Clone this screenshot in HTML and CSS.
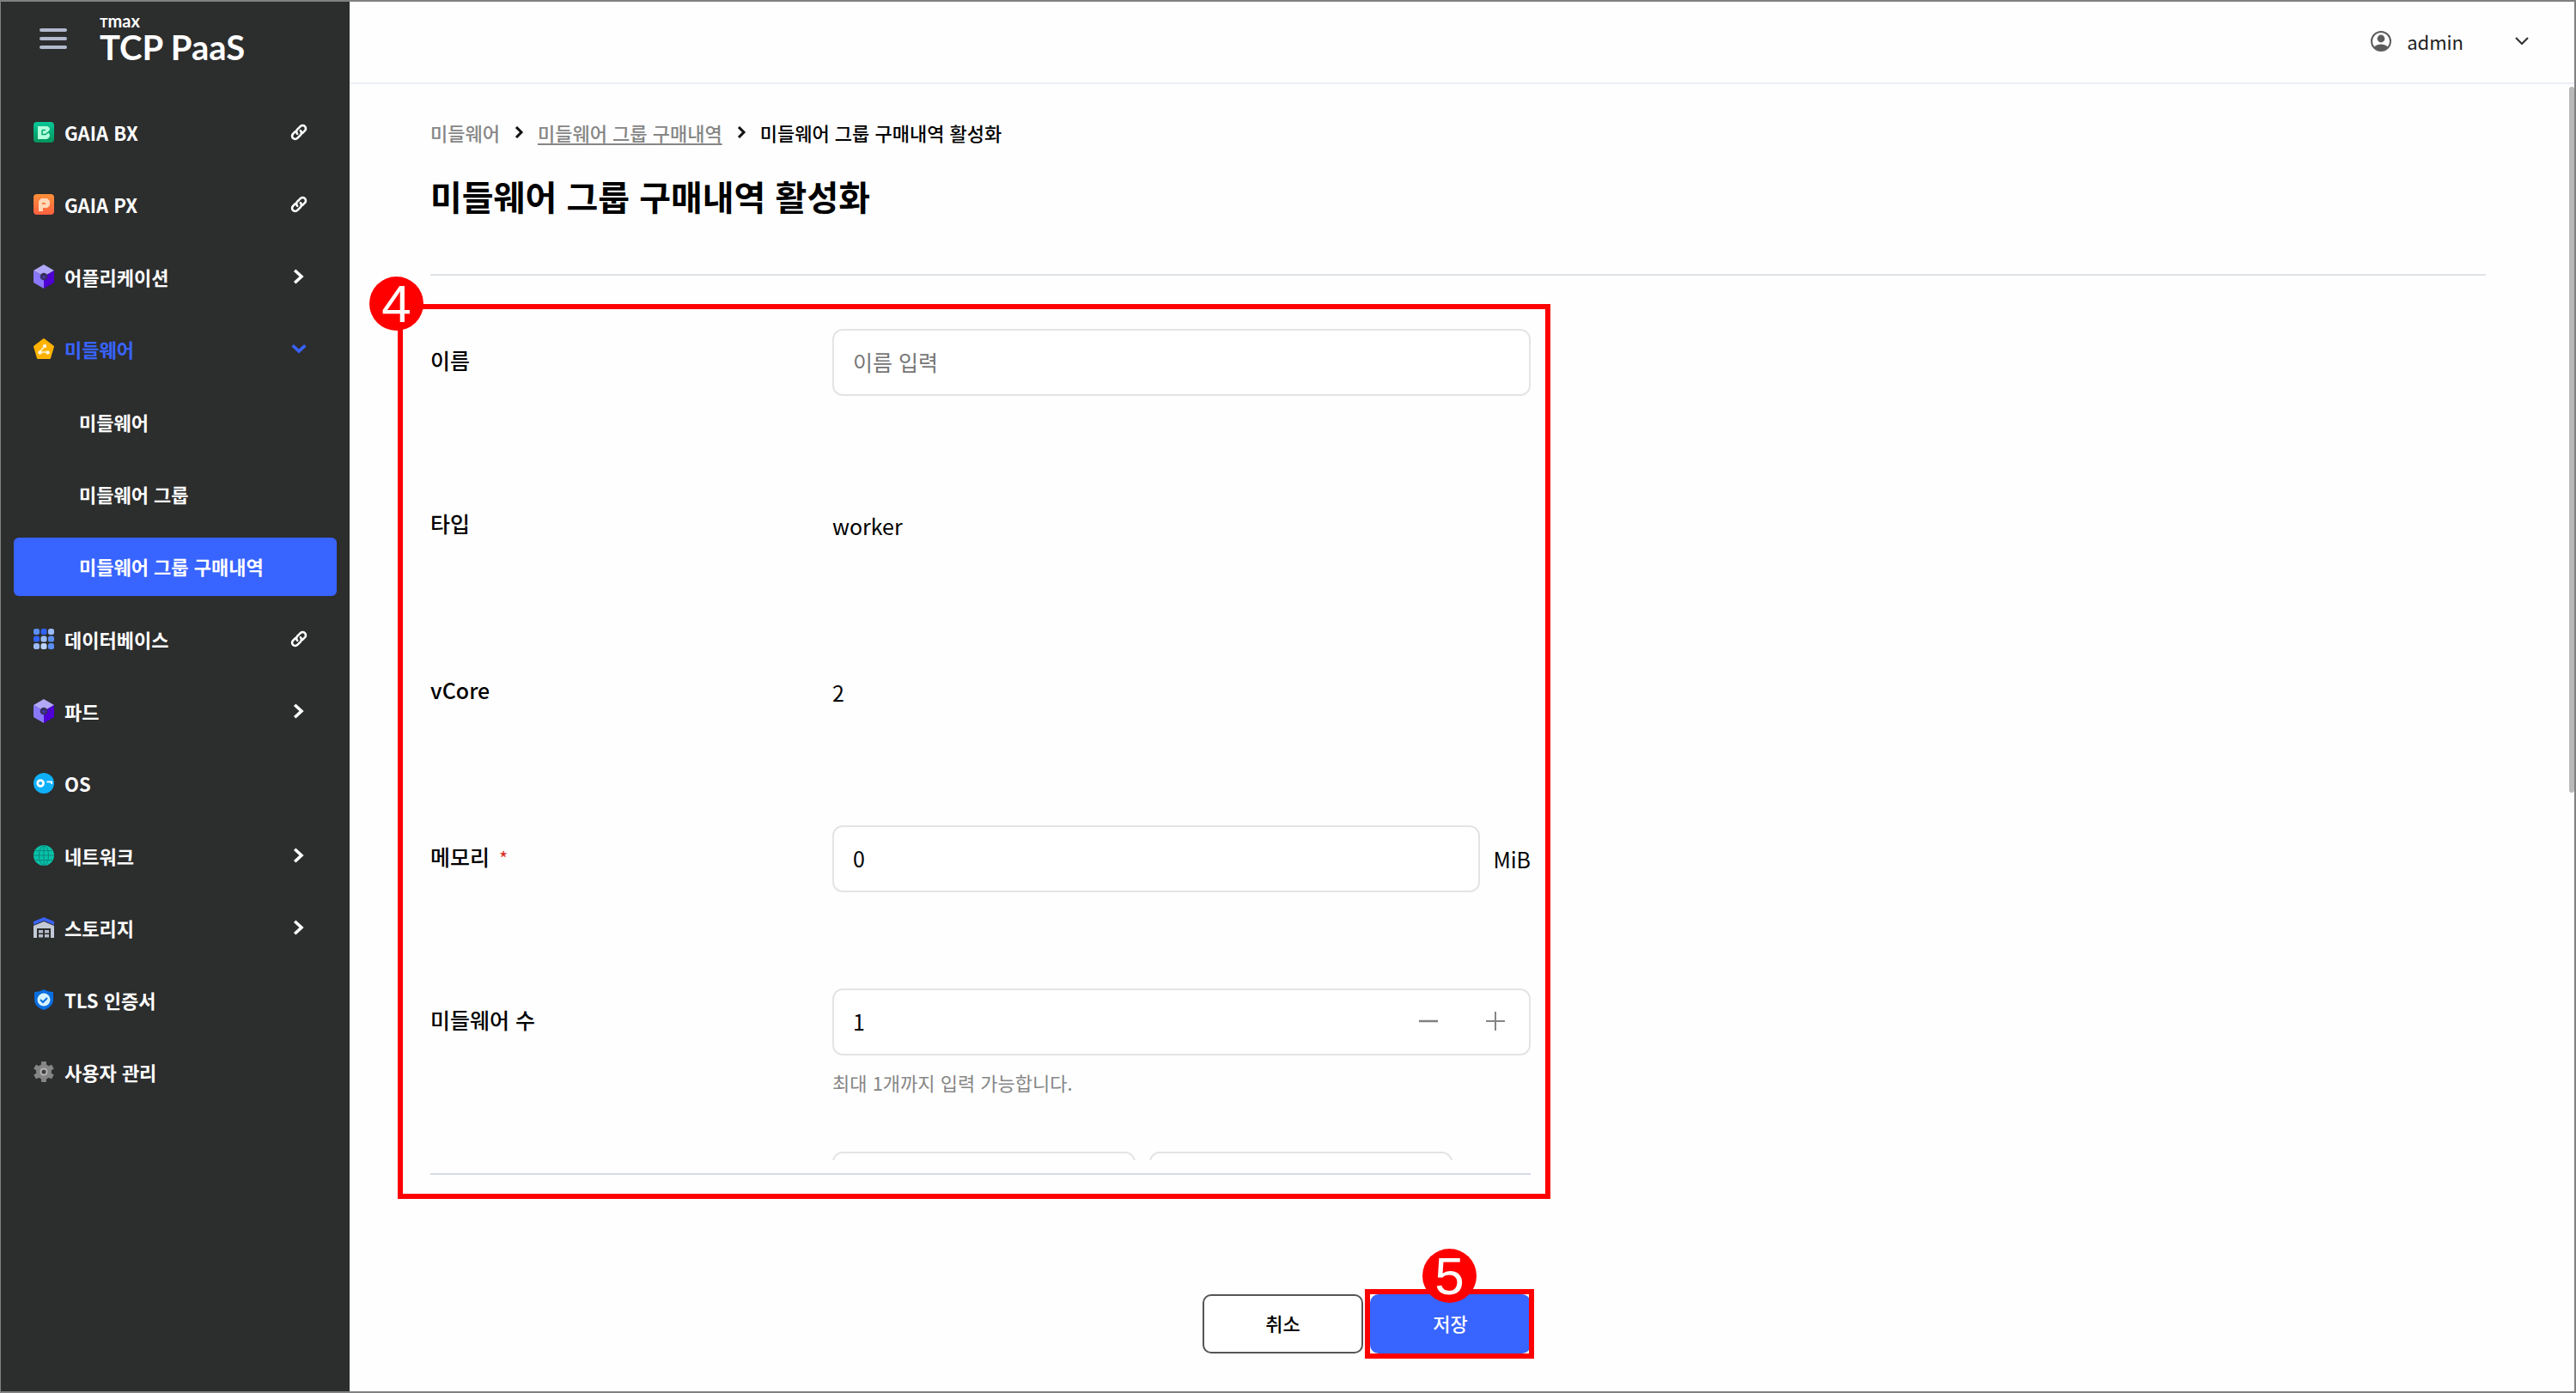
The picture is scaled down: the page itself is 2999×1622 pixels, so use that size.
FILE: index.html
```html
<!DOCTYPE html>
<html lang="ko">
<head>
<meta charset="utf-8">
<meta name="viewport" content="width=device-width, initial-scale=1">
<title>미들웨어 그룹 구매내역 활성화</title>
<link rel="stylesheet" href="styles.css">
</head>
<body>
<svg class="sprite" aria-hidden="true">
  <symbol id="i-link" viewBox="0 0 20 20"><g fill="none" stroke="currentColor" stroke-width="2.6" stroke-linecap="round"><path d="M8.2 11.8a3.6 3.6 0 0 1 0-5.1l3.6-3.6a3.6 3.6 0 0 1 5.1 5.1l-2.6 2.6"/><path d="M11.8 8.2a3.6 3.6 0 0 1 0 5.1l-3.6 3.6a3.6 3.6 0 0 1-5.1-5.1l2.6-2.6"/></g></symbol>
  <symbol id="i-right" viewBox="0 0 20 20"><path d="M6.5 4l6.5 6-6.5 6" fill="none" stroke="currentColor" stroke-width="3.6" stroke-linecap="square"/></symbol>
  <symbol id="i-down" viewBox="0 0 20 20"><path d="M4 7.5l6 5.500 6-5.500" fill="none" stroke="currentColor" stroke-width="3.6" stroke-linecap="square"/></symbol>
  <symbol id="i-cube" viewBox="0 0 24 28"><path d="M12 0l12 7-12 7L0 7z" fill="#b1a8f8"/><path d="M0 7l12 7v14L0 21z" fill="#8a78fa"/><path d="M24 7l-12 7v14l12-7z" fill="#4f00d3"/><circle cx="12" cy="14" r="4.300" fill="#33305a"/><path d="M9 14l3-1 3 1-3 3z" fill="#4b35a8"/></symbol>
</svg>
<div class="app">
  <aside class="sidebar">
    <div class="brand">
      <button class="menu-btn" type="button" aria-label="메뉴"><span></span><span></span><span></span></button>
      <a class="logo" href="#"><span class="logo-top"><span class="logo-t">T</span>max</span><span class="logo-main">TCP PaaS</span></a>
    </div>
    <nav class="nav">
      <a class="item" href="#"><svg class="ico" viewBox="0 0 24 24"><defs><linearGradient id="g1" x2="0" y2="1"><stop offset="0" stop-color="#06c898"/><stop offset="1" stop-color="#02935c"/></linearGradient></defs><rect width="24" height="24" rx="4" fill="url(#g1)"/><path d="M5 5h11q3 1 3 4l-2 3 2 3q0 4-4 5H5z" fill="#b4ffdc"/><path d="M10 9.500v5l4 0 5.500-4.500M10 9.500h4" fill="none" stroke="#05a972" stroke-width="1.500"/></svg><span>GAIA BX</span><svg class="end"><use href="#i-link"/></svg></a>
      <a class="item" href="#"><svg class="ico" viewBox="0 0 24 24"><defs><linearGradient id="g2" x2="0" y2="1"><stop offset="0" stop-color="#ff9038"/><stop offset="1" stop-color="#ff6040"/></linearGradient></defs><rect width="24" height="24" rx="4" fill="url(#g2)"/><path d="M6 20V8l3-3h7l3 3v5l-3 3h-5v4z" fill="#ffd8ba"/><path d="M10 10h4v2h-4z" fill="#ff7b3d"/></svg><span>GAIA PX</span><svg class="end"><use href="#i-link"/></svg></a>
      <a class="item" href="#"><svg class="ico tall"><use href="#i-cube"/></svg><span>어플리케이션</span><svg class="end"><use href="#i-right"/></svg></a>
      <a class="item open" href="#"><svg class="ico" viewBox="0 0 24 24"><path d="M12 1l11 8.500-4 13.500H5L1 9.500z" fill="#ffb300" stroke="#ffb300" stroke-width="2" stroke-linejoin="round"/><path d="M13 9l-6 7h10" fill="none" stroke="#fff6dc" stroke-width="1.500"/><g fill="#fff6dc"><circle cx="13" cy="9" r="2.200"/><circle cx="7.500" cy="16.500" r="2.300"/><circle cx="16.500" cy="16.500" r="2.300"/></g></svg><span>미들웨어</span><svg class="end"><use href="#i-down"/></svg></a>
      <div class="sub">
        <a class="item" href="#">미들웨어</a>
        <a class="item" href="#">미들웨어 그룹</a>
        <a class="item active" href="#" aria-current="page">미들웨어 그룹 구매내역</a>
      </div>
      <a class="item" href="#"><svg class="ico" viewBox="0 0 24 24"><g fill="#5b8ff5"><rect width="7" height="7" rx="2.500"/><rect x="17" y="17" width="7" height="7" rx="2.500"/><rect x="17" y="8.500" width="7" height="7" rx="2.500"/></g><g fill="#3163ff"><rect x="8.500" width="7" height="7" rx="2.500"/><rect y="8.500" width="7" height="7" rx="2.500"/></g><g fill="#9dbdf8"><rect x="17" width="7" height="7" rx="2.500"/><rect x="8.500" y="8.500" width="7" height="7" rx="2.500"/><rect y="17" width="7" height="7" rx="2.500"/></g><rect x="8.500" y="17" width="7" height="7" rx="2.500" fill="#bcd3fa"/></svg><span>데이터베이스</span><svg class="end"><use href="#i-link"/></svg></a>
      <a class="item" href="#"><svg class="ico tall"><use href="#i-cube"/></svg><span>파드</span><svg class="end"><use href="#i-right"/></svg></a>
      <a class="item" href="#"><svg class="ico wide" viewBox="0 0 28 28"><circle cx="14" cy="14" r="14" fill="#0eb0fa"/><circle cx="9.500" cy="14" r="4" fill="none" stroke="#fff" stroke-width="3.200"/><path d="M18 12.200h6.500v3" fill="none" stroke="#fff" stroke-width="2"/></svg><span>OS</span></a>
      <a class="item" href="#"><svg class="ico" viewBox="0 0 24 24"><circle cx="12" cy="12" r="12" fill="#08c0a8"/><g fill="none" stroke="#078b7c" stroke-width="1"><ellipse cx="12" cy="12" rx="5.500" ry="11.500"/><path d="M12 0v24M0 12h24M2 6.500h20M2 17.500h20"/></g></svg><span>네트워크</span><svg class="end"><use href="#i-right"/></svg></a>
      <a class="item" href="#"><svg class="ico" viewBox="0 0 24 24"><path d="M0 10l12-5 12 5v14h-4V13H4v11H0z" fill="#c3cad6"/><path d="M0 5l12-5 12 5v4L12 4 0 9z" fill="#3a63f5"/><g fill="#b4bccb"><rect x="6" y="15" width="5" height="3.500"/><rect x="13" y="15" width="5" height="3.500"/><rect x="6" y="20" width="5" height="3.500"/><rect x="13" y="20" width="5" height="3.500"/></g></svg><span>스토리지</span><svg class="end"><use href="#i-right"/></svg></a>
      <a class="item" href="#"><svg class="ico" viewBox="0 0 24 24"><path d="M12 0c3 2 7 3 11 3v9c0 6-5 10-11 12C6 22 1 18 1 12V3c4 0 8-1 11-3z" fill="#0a6fe0"/><circle cx="12" cy="12" r="7.500" fill="#d6f4ff"/><path d="M8 12l3 3 5-5" fill="none" stroke="#0a6fe0" stroke-width="2"/></svg><span>TLS 인증서</span></a>
      <a class="item" href="#"><svg class="ico" viewBox="0 0 24 24"><g fill="#858585"><circle cx="12" cy="12" r="9"/><rect x="9" y="0" width="6" height="24" rx="1"/><rect x="9" y="0" width="6" height="24" rx="1" transform="rotate(60 12 12)"/><rect x="9" y="0" width="6" height="24" rx="1" transform="rotate(120 12 12)"/></g><circle cx="12" cy="12" r="3.500" fill="#3c3c3c" stroke="#b4b4b4" stroke-width="2"/></svg><span>사용자 관리</span></a>
    </nav>
  </aside>

  <div class="page">
    <header class="topbar">
      <button class="account" type="button">
        <svg class="avatar" viewBox="0 0 24 24"><defs><clipPath id="av"><circle cx="12" cy="12" r="10.500"/></clipPath></defs><circle cx="12" cy="12" r="11" fill="none" stroke="#5c5c5c" stroke-width="2"/><circle cx="12" cy="9" r="4.400" fill="#5c5c5c"/><ellipse cx="12" cy="21" rx="8.500" ry="5.500" fill="#5c5c5c" clip-path="url(#av)"/></svg>
        <span>admin</span>
        <svg class="caret" viewBox="0 0 16 10"><path d="M1 1l7 7 7-7" fill="none" stroke="#333" stroke-width="2.200"/></svg>
      </button>
    </header>

    <main class="content">
      <nav class="crumbs" aria-label="경로">
        <span class="muted">미들웨어</span>
        <svg viewBox="0 0 12 14"><path d="M3 1l6 6-6 6" fill="none" stroke="#111" stroke-width="3"/></svg>
        <a class="muted" href="#">미들웨어 그룹 구매내역</a>
        <svg viewBox="0 0 12 14"><path d="M3 1l6 6-6 6" fill="none" stroke="#111" stroke-width="3"/></svg>
        <span aria-current="page">미들웨어 그룹 구매내역 활성화</span>
      </nav>
      <h1>미들웨어 그룹 구매내역 활성화</h1>

      <form class="form">
        <div class="panel">
          <div class="rows">
            <div class="row"><label for="name">이름</label><input class="box" id="name" type="text" placeholder="이름 입력"></div>
            <div class="row static"><span class="label">타입</span><span class="value">worker</span></div>
            <div class="row static"><span class="label">vCore</span><span class="value">2</span></div>
            <div class="row"><label for="mem">메모리<span class="req">*</span></label><div class="unit"><input class="box" id="mem" type="text" inputmode="numeric" value="0" required><span>MiB</span></div></div>
            <div class="row"><label for="cnt">미들웨어 수</label>
              <div class="field">
                <div class="box stepper"><input id="cnt" type="text" inputmode="numeric" value="1"><button type="button" aria-label="감소"><svg viewBox="0 0 22 22"><path d="M0 11h22" stroke="#808080" stroke-width="2.500"/></svg></button><button type="button" aria-label="증가"><svg viewBox="0 0 22 22"><path d="M0 11h22M11 0v22" stroke="#858585" stroke-width="2"/></svg></button></div>
                <p class="hint">최대 1개까지 입력 가능합니다.</p>
              </div>
            </div>
            <div class="row"><span></span><div class="pair"><input class="box" type="text" aria-label="키"><input class="box" type="text" aria-label="값"></div></div>
          </div>
          <div class="mark mark-form"></div>
          <span class="badge badge-form">4</span>
        </div>
        <div class="actions">
          <button class="btn" type="button">취소</button>
          <div class="save">
            <button class="btn primary" type="submit">저장</button>
            <div class="mark mark-save"></div>
            <span class="badge badge-save">5</span>
          </div>
        </div>
      </form>
      <div class="scrollbar"></div>
    </main>
  </div>
</div>
</body>
</html>
```

FILE: styles.css
```css
* { box-sizing: border-box; }
body { margin: 0; font-family: "Noto Sans CJK KR", "Noto Sans", sans-serif; font-size: 25px; color: #000; background: #fefefe; }
a { color: inherit; text-decoration: none; }
button, input { font: inherit; color: inherit; }
button { cursor: pointer; background: none; border: 0; padding: 0; }
.sprite { position: absolute; width: 0; height: 0; }

.app { display: flex; height: 100vh; border: 2px solid #808080; border-left-width: 1px; }

/* Sidebar */
.sidebar { flex: none; width: 406px; background: #2c2d2d; color: #fff; }
.brand { display: flex; align-items: center; gap: 38px; height: 96px; padding: 0 0 10px 45px; }
.menu-btn { display: flex; flex-direction: column; gap: 6px; width: 32px; }
.menu-btn span { height: 4px; border-radius: 2px; background: #b3bace; }
.logo { display: flex; flex-direction: column; font-family: Lato, sans-serif; font-weight: 700; }
.logo-top { font-size: 20px; line-height: 18px; }
.logo-t { font-size: 16px; }
.logo-main { font-size: 40px; line-height: 40px; }
.nav { display: flex; flex-direction: column; gap: 16px; padding: 23px 15px; font-size: 22px; font-weight: 700; }
.item { display: flex; align-items: center; gap: 12px; height: 68px; padding: 0 34px 2px 23px; border-radius: 6px; }
.ico { width: 24px; height: 24px; overflow: visible; }
.ico.tall { height: 28px; }
.ico.wide { width: 28px; margin: 0 -2px; }
.end { width: 20px; height: 20px; margin-left: auto; }
.open { color: #3864ff; }
.sub { display: flex; flex-direction: column; gap: 16px; margin: 1px 0; }
.sub .item { padding-left: 76px; }
.active { background: #3864ff; }

/* Top bar */
.page { flex: 1; min-width: 0; display: flex; flex-direction: column; }
.topbar { flex: none; display: flex; align-items: center; justify-content: flex-end; height: 96px; padding: 0 53px 2px; border-bottom: 2px solid #eceef4; }
.account { display: flex; align-items: center; gap: 18px; font-size: 22px; color: #222; }
.avatar { width: 24px; height: 24px; overflow: visible; }
.caret { width: 16px; height: 10px; margin-left: 42px; }

/* Content */
.content { position: relative; flex: 1; min-height: 0; display: flex; flex-direction: column; padding: 40px 103px 44px 94px; }
.crumbs { display: flex; align-items: center; gap: 16px; font-size: 22px; line-height: 32px; font-weight: 500; }
.crumbs svg { width: 12px; height: 14px; }
.muted { color: #868686; }
.crumbs a { text-decoration: underline; text-decoration-thickness: 2px; text-underline-offset: 3px; }
h1 { margin: 28px 0 0; padding-bottom: 61px; border-bottom: 2px solid #dfe3e8; font-size: 40px; line-height: 60px; font-weight: 700; }
.form { flex: 1; min-height: 0; display: flex; flex-direction: column; width: 100%; max-width: 1281px; }
.panel { position: relative; flex: 1; min-height: 0; display: flex; padding: 62px 0 15px; border-bottom: 2px solid #d5dae6; }
.rows { flex: 1; overflow: hidden; }
.row { display: grid; grid-template-columns: 468px 1fr; align-items: start; min-height: 190px; }
.row.static { min-height: 194px; }
.row label, .label { line-height: 72px; font-weight: 500; }
.value { line-height: 78px; }
.req { margin-left: 11px; color: #d92d20; font-size: 22px; font-weight: 400; }
.box { width: 100%; height: 78px; padding: 0 22px 2px; border: 2px solid #e4e4e4; border-radius: 12px; background: #fff; outline: 0; }
.box::placeholder { color: #757575; }
.unit { display: flex; align-items: center; gap: 15px; }
.unit .box { flex: 1; min-width: 0; }
.stepper { display: flex; align-items: center; gap: 56px; padding-right: 28px; }
.stepper input { flex: 1; min-width: 0; border: 0; padding: 0; background: none; outline: 0; }
.stepper svg { display: block; width: 22px; height: 22px; }
.hint { margin: 15px 0 0; font-size: 22px; line-height: 32px; color: #868686; }
.pair { display: grid; grid-template-columns: 1fr 1fr; gap: 16px; padding-right: 91px; }

.actions { flex: none; display: flex; justify-content: flex-end; gap: 8px; padding-top: 139px; }
.btn { width: 187px; height: 69px; padding-bottom: 4px; border: 2px solid #555; border-radius: 10px; background: #fff; font-size: 22px; font-weight: 500; }
.primary { display: block; border-color: #3864ff; background: #3864ff; color: #fff; }
.save { position: relative; }

/* Step callouts drawn over the form */
.mark { position: absolute; border: 6px solid #f00; pointer-events: none; }
.mark-form { inset: 33px -23px -30px -38px; }
.mark-save { inset: -6px -4px -6px -6px; }
.badge { position: absolute; width: 63px; height: 63px; border-radius: 50%; background: #f00; color: #fff; font-family: "Liberation Sans", sans-serif; font-size: 62px; line-height: 63px; text-align: center; }
.badge-form { left: -71px; top: 1px; }
.badge-save { left: 61px; top: -53px; }

.scrollbar { position: absolute; top: 3px; right: 0; width: 6px; height: 54%; border-radius: 3px; background: #b9b9b9; }
```
